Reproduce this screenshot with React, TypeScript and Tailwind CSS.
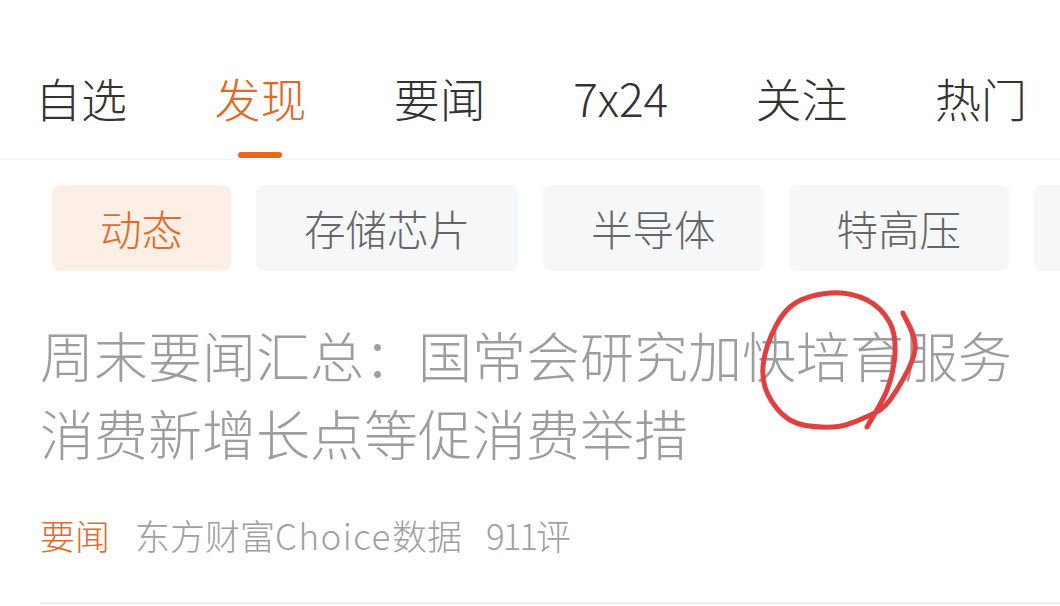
const tabs = ["自选", "发现", "要闻", "7x24", "关注", "热门"];
const chips = ["动态", "存储芯片", "半导体", "特高压"];

// hand-drawn red mark around 培育
const mark: [number, number][] = [
  [903, 313],
  [915, 350],
  [890, 400],
  [866, 417],
  [833, 427],
  [790, 420],
  [765, 387],
  [767, 347],
  [790, 307],
  [830, 293],
  [867, 300],
  [890, 323],
  [895, 353],
  [887, 390],
  [867, 427],
];

function smoothPath(pts: [number, number][]) {
  let d = `M${pts[0][0]} ${pts[0][1]}`;
  for (let i = 0; i < pts.length - 1; i++) {
    const p0 = pts[i - 1] ?? pts[i];
    const p1 = pts[i];
    const p2 = pts[i + 1];
    const p3 = pts[i + 2] ?? p2;
    const c1x = p1[0] + (p2[0] - p0[0]) / 6;
    const c1y = p1[1] + (p2[1] - p0[1]) / 6;
    const c2x = p2[0] - (p3[0] - p1[0]) / 6;
    const c2y = p2[1] - (p3[1] - p1[1]) / 6;
    d += ` C${c1x} ${c1y} ${c2x} ${c2y} ${p2[0]} ${p2[1]}`;
  }
  return d;
}

export default function App() {
  return (
    <div className="relative h-[606px] w-[1060px] overflow-hidden bg-white font-['Noto_Sans_CJK_SC','Noto_Sans',sans-serif] font-light">
      <nav className="flex h-[160px] items-start justify-between border-b border-[#f2f2f2] pl-[35px] pr-[33px] pt-[69px]">
        {tabs.map((t) => {
          const active = t === "发现";
          return (
            <div key={t} className="flex flex-col items-center">
              <span
                className={
                  active
                    ? "text-[46px] leading-[56px] text-[#e8661e]"
                    : "text-[46px] leading-[56px] text-[#333333]"
                }
              >
                {t}
              </span>
              {active && (
                <span className="mt-[27px] h-[6px] w-[44px] rounded-full bg-[#e8661e]" />
              )}
            </div>
          );
        })}
      </nav>

      <div className="mt-[25px] flex gap-[25px] overflow-hidden pl-[52px]">
        {chips.map((c, i) => (
          <div
            key={c}
            className={
              i === 0
                ? "flex h-[86px] shrink-0 items-center rounded-[8px] bg-[#fdeee6] px-[48px] text-[41.5px] text-[#e26a2a]"
                : "flex h-[86px] shrink-0 items-center rounded-[8px] bg-[#f6f7f9] px-[48px] text-[41.5px] text-[#666666]"
            }
          >
            {c}
          </div>
        ))}
        <div className="h-[86px] w-[200px] shrink-0 rounded-[8px] bg-[#f6f7f9]" />
      </div>

      <h2 className="mt-[45px] px-[40px] text-[54px] leading-[78px] font-light text-[#9d9d9d]">
        周末要闻汇总：国常会研究加快培育服务消费新增长点等促消费举措
      </h2>

      <div className="mt-[39px] flex items-center pl-[40px] text-[35px] leading-[48px]">
        <span className="text-[#e26a2a]">要闻</span>
        <span className="ml-[25px] text-[#a0a0a0]">
          东方财富<span className="tracking-[1.5px]">Choice</span>数据
        </span>
        <span className="ml-[24px] text-[#a0a0a0]">
          <span className="tracking-[-2px]">911</span>评
        </span>
      </div>

      <div className="ml-[40px] mt-[43px] h-[2px] bg-[#ececec]" />

      <svg
        className="pointer-events-none absolute inset-0"
        width="1060"
        height="606"
        viewBox="0 0 1060 606"
      >
        <path
          d={smoothPath(mark)}
          fill="none"
          stroke="#e2403f"
          strokeWidth="5"
          strokeLinecap="round"
          strokeLinejoin="round"
        />
      </svg>
    </div>
  );
}
